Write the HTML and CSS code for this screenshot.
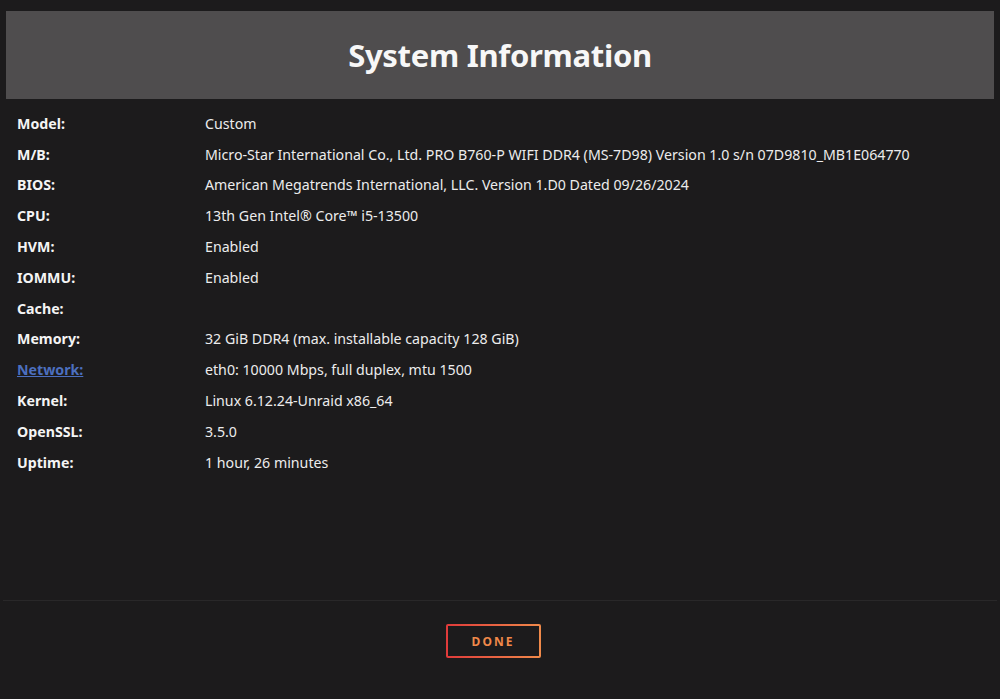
FILE: index.html
```html
<!DOCTYPE html>
<html lang="en">
<head>
<meta charset="utf-8">
<title>System Information</title>
<link rel="stylesheet" href="styles.css">
</head>
<body>
<div class="dialog">
  <div class="header"><h1 class="title">System Information</h1></div>
  <div class="info">
    <div class="row"><span class="label">Model:</span><span class="value">Custom</span></div>
    <div class="row"><span class="label">M/B:</span><span class="value">Micro-Star International Co., Ltd. PRO B760-P WIFI DDR4 (MS-7D98) Version 1.0 s/n 07D9810_MB1E064770</span></div>
    <div class="row"><span class="label">BIOS:</span><span class="value">American Megatrends International, LLC. Version 1.D0 Dated 09/26/2024</span></div>
    <div class="row"><span class="label">CPU:</span><span class="value">13th Gen Intel® Core™ i5-13500</span></div>
    <div class="row"><span class="label">HVM:</span><span class="value">Enabled</span></div>
    <div class="row"><span class="label">IOMMU:</span><span class="value">Enabled</span></div>
    <div class="row"><span class="label">Cache:</span><span class="value"></span></div>
    <div class="row"><span class="label">Memory:</span><span class="value">32 GiB DDR4 (max. installable capacity 128 GiB)</span></div>
    <div class="row"><span class="label"><a class="link" href="#">Network:</a></span><span class="value">eth0: 10000 Mbps, full duplex, mtu 1500</span></div>
    <div class="row"><span class="label">Kernel:</span><span class="value">Linux 6.12.24-Unraid x86_64</span></div>
    <div class="row"><span class="label">OpenSSL:</span><span class="value">3.5.0</span></div>
    <div class="row"><span class="label">Uptime:</span><span class="value">1 hour, 26 minutes</span></div>
  </div>
  <div class="footer">
    <button class="done">DONE</button>
  </div>
</div>
</body>
</html>
```

FILE: styles.css
```css
html, body {
  margin: 0;
  padding: 0;
  background: #1c1b1c;
  height: 100%;
}
body {
  font-family: "Noto Sans", "Open Sans", sans-serif;
  color: #f2f2f2;
}
.dialog {
  display: flex;
  flex-direction: column;
  height: 699px;
  box-sizing: border-box;
  padding: 11px 6px 0 6px;
}
.header {
  background: #4f4d4e;
  height: 88px;
  display: flex;
  align-items: center;
  justify-content: center;
}
.title {
  margin: 0;
  font-size: 31px;
  font-weight: 700;
  color: #f7f7f7;
  letter-spacing: -0.3px;
}
.info {
  padding: 9px 0 0 14px;
  height: 492px;
  border-bottom: 1px solid #292829;
  margin: 0 -3px;
}
.row {
  display: flex;
  height: 30.8px;
  align-items: center;
  font-size: 14.2px;
}
.label {
  width: 188px;
  font-weight: 700;
  color: #f4f4f4;
}
.value {
  color: #ececec;
}
.link {
  color: #4c6fbf;
  text-decoration: underline;
}
.footer {
  display: flex;
  justify-content: center;
  padding-top: 23px;
  padding-right: 14px;
}
.done {
  width: 95px;
  height: 34px;
  border: 2px solid transparent;
  border-radius: 2px;
  background-image: linear-gradient(#1c1b1c, #1c1b1c), linear-gradient(90deg, #e03a3a, #f08a4a);
  background-origin: border-box;
  background-clip: padding-box, border-box;
  color: #f0894a;
  font-family: "Noto Sans", sans-serif;
  font-weight: 700;
  font-size: 12px;
  letter-spacing: 2px;
  padding: 0;
}
```
